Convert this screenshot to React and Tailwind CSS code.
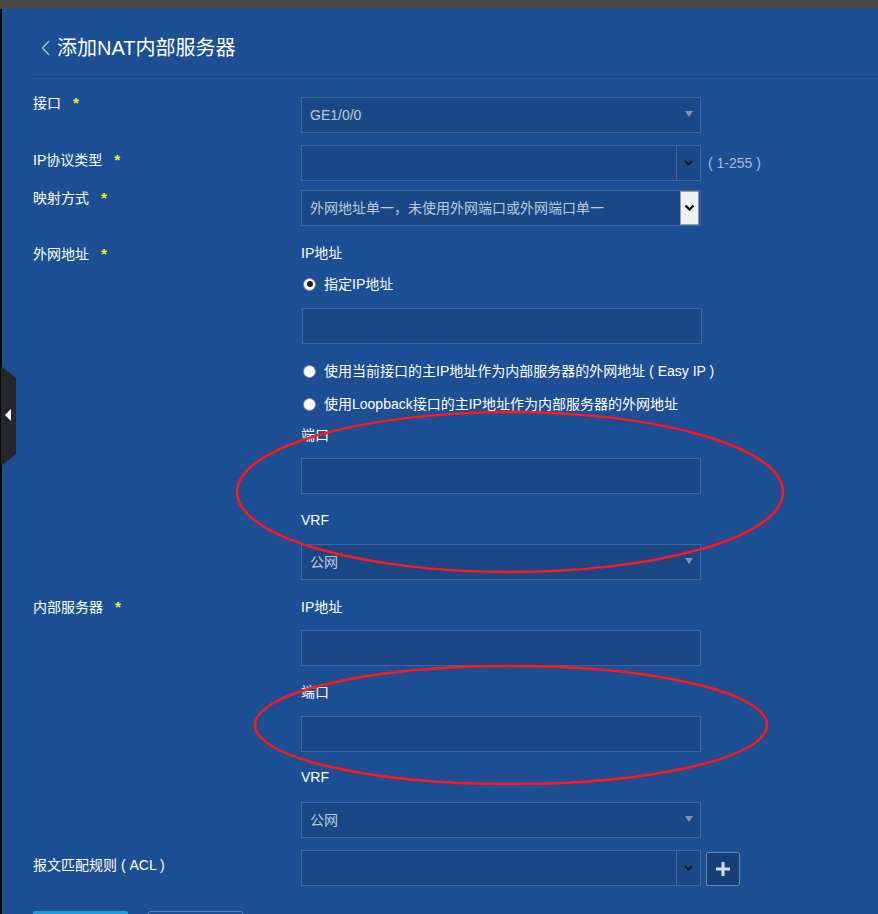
import React from "react";

const FONT = { fontFamily: '"Liberation Sans", "Noto Sans CJK SC", sans-serif' };

function Label({ text, star = true, cls = "" }) {
  return (
    <div className={`w-[268px] shrink-0 text-[14px] leading-[20px] text-white ${cls}`}>
      {text}
      {star && <span className="ml-[12px] text-[15px] font-bold text-[#fff200]">*</span>}
    </div>
  );
}

function Select({ value, cls = "" }) {
  return (
    <div className={`relative flex h-[36px] w-[400px] items-center border border-[#3d66a2] bg-[#1a4887] pl-[8px] text-[14px] text-[#bdc8d8] ${cls}`}>
      {value}
      <span className="absolute right-[7px] top-[13px] h-0 w-0 border-x-[4px] border-t-[6px] border-x-transparent border-t-[#8193ae]" />
    </div>
  );
}

function Input({ cls = "" }) {
  return <div className={`h-[36px] w-[400px] border border-[#3d66a2] bg-[#1a4887] ${cls}`} />;
}

function ComboInput({ cls = "" }) {
  return (
    <div className={`flex h-[36px] w-[400px] border border-[#3d66a2] bg-[#1a4887] ${cls}`}>
      <div className="flex-1" />
      <div className="flex w-[24px] items-center justify-center border-l border-[#3d66a2]">
        <svg width="9" height="6" viewBox="0 0 9 6">
          <polyline points="1,1 4.5,4.5 8,1" fill="none" stroke="#0d0d0d" strokeWidth="1.6" />
        </svg>
      </div>
    </div>
  );
}

function Radio({ checked, text, cls = "" }) {
  return (
    <div className={`flex h-[20px] items-center text-[14px] text-white ${cls}`}>
      <span className="ml-[2px] flex h-[13px] w-[13px] items-center justify-center rounded-full border border-[#8a8a8a] bg-white">
        {checked && <span className="h-[6px] w-[6px] rounded-full bg-[#222]" />}
      </span>
      <span className="ml-[8px]">{text}</span>
    </div>
  );
}

function Text({ children, cls = "" }) {
  return <div className={`h-[20px] text-[14px] leading-[20px] text-white ${cls}`}>{children}</div>;
}

export default function App() {
  return (
    <div style={FONT} className="relative h-[914px] w-full overflow-hidden bg-[#1c4f93]">
      <div className="h-[9px] bg-[#4a494e]" />
      <div className="absolute left-0 top-[9px] h-[905px] w-[2px] bg-[#0b0b0d]" />

      {/* header */}
      <div className="ml-[33px] flex h-[68px] items-center border-b border-[#173d70] pt-[11px]">
        <svg width="12" height="16" viewBox="0 0 12 16" className="ml-[7px]">
          <polyline points="9,1 2.5,8 9,15" fill="none" stroke="#a9bbd6" strokeWidth="1.4" />
        </svg>
        <span className="ml-[5px] text-[20px] leading-[24px] text-white">添加NAT内部服务器</span>
      </div>

      <div className="pl-[33px]">
        {/* 接口 */}
        <div className="mt-[20px] flex items-start">
          <Label text="接口" cls="-mt-[4px]" />
          <Select value="GE1/0/0" />
        </div>

        {/* IP协议类型 */}
        <div className="mt-[12px] flex items-start">
          <Label text="IP协议类型" cls="mt-[5px]" />
          <ComboInput />
          <span className="ml-[7px] mt-[8px] text-[14px] leading-[20px] text-[#a8bbd7]">( 1-255 )</span>
        </div>

        {/* 映射方式 */}
        <div className="mt-[9px] flex items-start">
          <Label text="映射方式" cls="-mt-[2px]" />
          <div className="flex h-[36px] w-[400px] items-center border border-[#3d66a2] bg-[#1a4887] pl-[8px] text-[14px] text-[#bdc8d8]">
            <span className="flex-1">外网地址单一，未使用外网端口或外网端口单一</span>
            <span className="mr-[1px] flex h-[34px] w-[19px] items-center justify-center border border-[#9a9a9a] bg-[#f0f0f0]">
              <svg width="11" height="8" viewBox="0 0 11 8">
                <polyline points="1.5,1.5 5.5,5.5 9.5,1.5" fill="none" stroke="#000" strokeWidth="2.2" />
              </svg>
            </span>
          </div>
        </div>

        {/* 外网地址 */}
        <div className="mt-[17px] flex items-start">
          <Label text="外网地址" cls="mt-[1px]" />
          <div className="flex flex-col">
            <Text>IP地址</Text>
            <Radio checked text="指定IP地址" cls="mt-[11px]" />
            <Input cls="ml-[1px] mt-[14px]" />
            <Radio text="使用当前接口的主IP地址作为内部服务器的外网地址 ( Easy IP )" cls="mt-[17px]" />
            <Radio text="使用Loopback接口的主IP地址作为内部服务器的外网地址" cls="mt-[13px]" />
            <Text cls="mt-[11px]">端口</Text>
            <Input cls="mt-[13px]" />
            <Text cls="mt-[16px]">VRF</Text>
            <Select value="公网" cls="mt-[14px]" />
          </div>
        </div>

        {/* 内部服务器 */}
        <div className="mt-[17px] flex items-start">
          <Label text="内部服务器" />
          <div className="flex flex-col">
            <Text>IP地址</Text>
            <Input cls="mt-[13px]" />
            <Text cls="mt-[16px]">端口</Text>
            <Input cls="mt-[14px]" />
            <Text cls="mt-[15px]">VRF</Text>
            <Select value="公网" cls="mt-[15px]" />
          </div>
        </div>

        {/* ACL */}
        <div className="mt-[12px] flex items-start">
          <Label text="报文匹配规则 ( ACL )" star={false} cls="mt-[5px]" />
          <ComboInput />
          <div className="ml-[5px] mt-[2px] flex h-[34px] w-[34px] items-center justify-center rounded-[2px] border border-[#6586b8] bg-[#173f77]">
            <svg width="14" height="14" viewBox="0 0 14 14">
              <rect x="5.5" y="0" width="3" height="14" fill="#d3dbe8" />
              <rect x="0" y="5.5" width="14" height="3" fill="#d3dbe8" />
            </svg>
          </div>
        </div>

        {/* buttons */}
        <div className="mt-[25px] flex gap-[20px]">
          <div className="h-[32px] w-[95px] rounded-[2px] bg-[#1b9bd8]" />
          <div className="h-[32px] w-[95px] rounded-[2px] border border-[#5a7eb6]" />
        </div>
      </div>

      {/* side collapse tab */}
      <svg className="absolute left-0 top-[366px]" width="17" height="100" viewBox="0 0 17 100">
        <polygon points="1,0 16,12 16,88 1,100" fill="#242628" />
        <polygon points="5,49 11,43 11,55" fill="#ffffff" />
      </svg>

      {/* red annotation ellipses */}
      <svg className="pointer-events-none absolute left-0 top-0" width="878" height="914">
        <ellipse cx="510" cy="492" rx="273" ry="80" fill="none" stroke="#ff1a1a" strokeWidth="2.5" />
        <ellipse cx="511" cy="725" rx="256" ry="59" fill="none" stroke="#ff1a1a" strokeWidth="2.5" />
      </svg>
    </div>
  );
}
